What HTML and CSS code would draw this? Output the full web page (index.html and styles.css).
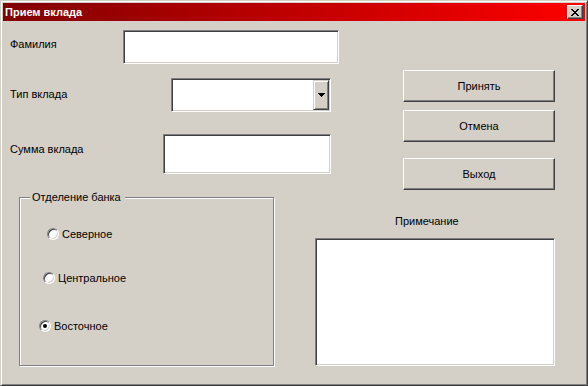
FILE: index.html
```html
<!DOCTYPE html>
<html lang="ru">
<head>
    <meta charset="UTF-8">
    <meta name="viewport" content="width=device-width, initial-scale=1.0">
    <title>Прием вклада</title>
    <link rel="stylesheet" href="styles.css">
</head>
<body>
    <div class="window">
        <div class="titlebar">
            <span class="title">Прием вклада</span>
            <span class="close-btn">
                <svg width="8" height="7" viewBox="0 0 8 7" shape-rendering="crispEdges">
                    <path d="M0 0h2v1h-2zM6 0h2v1h-2zM1 1h2v1h-2zM5 1h2v1h-2zM2 2h4v1h-4zM3 3h2v1h-2zM2 4h4v1h-4zM1 5h2v1h-2zM5 5h2v1h-2zM0 6h2v1h-2zM6 6h2v1h-2z" fill="#000"/>
                </svg>
            </span>
        </div>

        <div class="client">
            <div class="top">
                <div class="fields">
                    <div class="row row-name">
                        <label class="lbl lbl-name">Фамилия</label>
                        <input type="text" class="textbox box-name">
                    </div>
                    <div class="row row-type">
                        <label class="lbl lbl-type">Тип вклада</label>
                        <div class="combo">
                            <span class="drop-btn">
                                <svg width="7" height="4" viewBox="0 0 7 4" shape-rendering="crispEdges">
                                    <path d="M0 0h7v1h-7zM1 1h5v1h-5zM2 2h3v1h-3zM3 3h1v1h-1z" fill="#000"/>
                                </svg>
                            </span>
                        </div>
                    </div>
                    <div class="row row-sum">
                        <label class="lbl lbl-sum">Сумма вклада</label>
                        <input type="text" class="textbox box-sum">
                    </div>
                </div>
                <div class="buttons">
                    <button class="btn">Принять</button>
                    <button class="btn">Отмена</button>
                    <button class="btn btn-exit">Выход</button>
                </div>
            </div>

            <div class="bottom">
                <fieldset class="group">
                    <legend>Отделение банка</legend>
                    <div class="radio-row r1"><span class="radio"></span>Северное</div>
                    <div class="radio-row r2"><span class="radio"></span>Центральное</div>
                    <div class="radio-row r3"><span class="radio checked"></span>Восточное</div>
                </fieldset>
                <div class="note">
                    <div class="note-lbl">Примечание</div>
                    <textarea class="memo"></textarea>
                </div>
            </div>
        </div>
    </div>
</body>
</html>
```

FILE: styles.css
```css
body {
    margin: 0;
    background-color: #d4d0c8;
    font-family: "Liberation Sans", Arial, sans-serif;
    font-size: 11px;
    line-height: 13px;
    color: #000;
}
.window {
    width: 588px;
    height: 386px;
    box-sizing: border-box;
    border: 1px solid;
    border-color: #d4d0c8 #404040 #404040 #d4d0c8;
    box-shadow: inset 1px 1px #fff, inset -1px -1px #808080;
    padding: 2px;
    background-color: #d4d0c8;
}
.titlebar {
    height: 18px;
    display: flex;
    align-items: center;
    justify-content: space-between;
    padding: 0 2px;
    background: linear-gradient(to right, #800000, #ff0000);
    color: #fff;
}
.title {
    font-weight: bold;
}
.close-btn {
    width: 16px;
    height: 14px;
    box-sizing: border-box;
    display: flex;
    align-items: center;
    justify-content: center;
    background-color: #d4d0c8;
    border: 1px solid;
    border-color: #fff #404040 #404040 #fff;
    box-shadow: inset -1px -1px #808080;
}
.top {
    display: flex;
    height: 169px;
}
.fields {
    width: 400px;
}
.row {
    display: flex;
    align-items: center;
}
.lbl {
    box-sizing: border-box;
    padding-left: 7px;
}
.row-name {
    margin-top: 9px;
}
.lbl-name {
    width: 120px;
    margin-bottom: 5px;
}
.row-type {
    margin-top: 14px;
}
.lbl-type {
    width: 168px;
    margin-bottom: 2px;
}
.row-sum {
    margin-top: 22px;
}
.lbl-sum {
    width: 160px;
    margin-bottom: 10px;
}
.textbox, .combo, .memo {
    box-sizing: border-box;
    margin: 0;
    padding: 0;
    background-color: #fff;
    border: 1px solid;
    border-color: #808080 #fff #fff #808080;
    box-shadow: inset 1px 1px #404040, inset -1px -1px #d4d0c8;
    outline: none;
    font-family: inherit;
    font-size: 11px;
}
.box-name {
    width: 216px;
    height: 34px;
}
.box-sum {
    width: 168px;
    height: 40px;
}
.combo {
    width: 160px;
    height: 34px;
    padding: 1px;
    display: flex;
    justify-content: flex-end;
}
.drop-btn {
    width: 16px;
    height: 30px;
    box-sizing: border-box;
    display: flex;
    align-items: center;
    justify-content: center;
    background-color: #d4d0c8;
    border: 1px solid;
    border-color: #d4d0c8 #404040 #404040 #d4d0c8;
    box-shadow: inset 1px 1px #fff, inset -1px -1px #808080;
}
.buttons {
    display: flex;
    flex-direction: column;
    padding-top: 49px;
}
.btn {
    flex-shrink: 0;
    width: 152px;
    height: 32px;
    margin: 0;
    padding: 0;
    box-sizing: border-box;
    background-color: #d4d0c8;
    border: 1px solid;
    border-color: #fff #404040 #404040 #fff;
    box-shadow: inset -1px -1px #808080;
    font-family: inherit;
    font-size: 11px;
    color: #000;
}
.btn + .btn {
    margin-top: 8px;
}
.btn + .btn-exit {
    margin-top: 16px;
}
.bottom {
    display: flex;
}
.group {
    box-sizing: border-box;
    width: 255px;
    margin: 1px 0 0 16px;
    padding: 0 0 32px 0;
    min-width: 0;
    border: 1px solid #808080;
    box-shadow: inset 1px 1px #fff, 1px 1px #fff;
}
.group legend {
    margin-left: 10px;
    padding: 0 4px 0 2px;
    background-color: #d4d0c8;
    line-height: 13px;
}
.radio-row {
    display: flex;
    align-items: center;
    height: 12px;
    line-height: 12px;
}
.r1 {
    margin: 24px 0 0 27px;
}
.r2 {
    margin: 32px 0 0 23px;
}
.r3 {
    margin: 36px 0 0 19px;
}
.radio {
    width: 12px;
    height: 12px;
    box-sizing: border-box;
    margin-right: 3px;
    border-radius: 50%;
    border: 1px solid;
    border-color: #808080 #fff #fff #808080;
    box-shadow: inset 1px 1px #404040, inset -1px -1px #d4d0c8;
    background-color: #fff;
    display: flex;
    align-items: center;
    justify-content: center;
}
.radio.checked::after {
    content: "";
    width: 4px;
    height: 4px;
    border-radius: 50%;
    background-color: #000;
}
.note {
    margin-left: 41px;
}
.note-lbl {
    margin-top: 25px;
    padding-left: 80px;
}
.memo {
    display: block;
    margin-top: 10px;
    width: 240px;
    height: 128px;
    resize: none;
}
```
